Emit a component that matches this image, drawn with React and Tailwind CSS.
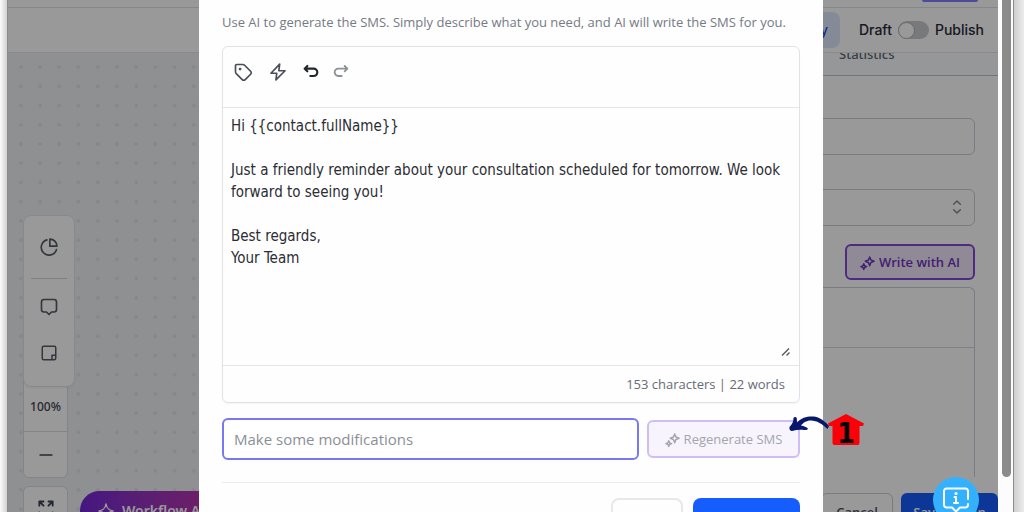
import React from "react";

const SPARKLE_BIG = "M12 1.500 C13 8 15.500 10.500 22.500 12 C15.500 13.500 13 16 12 22.500 C11 16 8.500 13.500 1.500 12 C8.500 10.500 11 8 12 1.500 Z";

function Sparkles({ className }) {
  return (
    <svg viewBox="0 0 24 24" className={className} fill="none" stroke="currentColor" strokeWidth="2.4" strokeLinejoin="round" aria-hidden="true">
      <path d="M15.500 1.500 L17.500 6.500 L22.500 8.500 L17.500 10.500 L15.500 15.500 L13.500 10.500 L8.500 8.500 L13.500 6.500 Z" />
      <path d="M6 12.500 L7.300 15.700 L10.500 17 L7.300 18.300 L6 21.500 L4.700 18.300 L1.500 17 L4.700 15.700 Z" />
    </svg>
  );
}

function Icon({ className, width = 2, children }) {
  return (
    <svg viewBox="0 0 24 24" className={className} fill="none" stroke="currentColor" strokeWidth={width} strokeLinecap="round" strokeLinejoin="round" aria-hidden="true">
      {children}
    </svg>
  );
}

function DotGrid() {
  return (
    <svg className="absolute inset-0 h-full w-full" aria-hidden="true">
      <defs>
        <pattern id="dots" x="3.200" y="4.500" width="19.22" height="19.22" patternUnits="userSpaceOnUse">
          <circle cx="9.600" cy="9.600" r="2" fill="#e0e2e6" />
        </pattern>
      </defs>
      <rect width="100%" height="100%" fill="url(#dots)" />
    </svg>
  );
}

function Canvas() {
  return (
    <main className="relative flex-1 bg-[#eef1f4]">
      <DotGrid />
      <div className="absolute bottom-0 left-[15px] flex flex-col gap-2 text-[#3d4350]">
        <div className="flex h-36 w-[45px] flex-col rounded-md border border-[#dadde3] bg-white">
          <span className="flex flex-1 items-end justify-center pb-4 text-xs font-medium">100%</span>
          <button aria-label="Zoom out" className="flex h-[46px] items-center justify-center border-t border-[#dadde3]">
            <Icon className="size-4"><path d="M3 12h18" /></Icon>
          </button>
        </div>
        <button aria-label="Full screen" className="flex h-[26px] w-[45px] justify-center rounded-t-md border border-b-0 border-[#dadde3] bg-white pt-3">
          <Icon className="size-5" width={2.2}><path d="M4 8V3h5M4 3l5 5M15 3h5v5M20 3l-5 5M4 16v5h5M20 16v5h-5" /></Icon>
        </button>
      </div>
      <div className="absolute bottom-[125px] left-[15px] flex h-[172px] w-[52px] flex-col items-center rounded-lg border border-[#e3e5e9] bg-white text-[#565b67] shadow-xs">
        <button aria-label="Statistics" className="flex h-[62px] items-center justify-center">
          <Icon className="size-5"><path d="M13 2.500v8.500h8.500A8.500 8.500 0 0 0 13 2.500Z" /><path d="M9.500 3.500a9.300 9.300 0 1 0 11.400 11.700" /></Icon>
        </button>
        <span className="h-px w-9 bg-[#cfd3da]" />
        <button aria-label="Comment" className="flex h-14 items-center justify-center">
          <Icon className="size-5"><path d="M6 3h12a3 3 0 0 1 3 3v9a3 3 0 0 1-3 3h-3l-3 3-3-3H6a3 3 0 0 1-3-3V6a3 3 0 0 1 3-3Z" /></Icon>
        </button>
        <button aria-label="Note" className="flex h-9 items-center justify-center">
          <Icon className="size-[18px]"><path d="M5 3h14a2 2 0 0 1 2 2v14a2 2 0 0 1-2 2H5a2 2 0 0 1-2-2V5a2 2 0 0 1 2-2ZM21 15h-5v6" /></Icon>
        </button>
      </div>
      <button className="absolute -bottom-[18px] left-[72px] flex h-[39px] items-center gap-2 rounded-full bg-gradient-to-r from-[#7325d6] to-[#c32fa4] px-[18px] text-sm font-semibold text-white">
        <svg viewBox="0 0 24 24" className="size-4" fill="none" stroke="currentColor" strokeWidth="2.400" strokeLinejoin="round" aria-hidden="true">
          <path d={SPARKLE_BIG} />
        </svg>
        Workflow AI
      </button>
    </main>
  );
}

function SidePanel() {
  return (
    <aside className="flex w-64 flex-col bg-white">
      <div className="flex h-[23px] shrink-0 items-start overflow-hidden border-b border-[#bfc3ca] bg-[#fbfcfd]">
        <span className="ml-[97px] -mt-2 text-[13px] leading-[18px] font-medium text-[#5f6572]">Statistics</span>
      </div>
      <div className="flex min-h-0 flex-1 flex-col overflow-hidden pr-[23px]">
        <input aria-label="Name" className="mt-[42px] h-[37px] w-full shrink-0 rounded-md border border-[#c9cdd4] px-3 text-sm" />
        <div className="relative mt-[34px] h-[37px] shrink-0">
          <select aria-label="Sender" className="h-full w-full appearance-none rounded-md border border-[#c9cdd4] px-3 text-sm">
            <option></option>
          </select>
          <Icon className="pointer-events-none absolute top-2.5 right-2.5 size-4 text-[#7c818c]"><path d="M7 8l5-5 5 5M7 16l5 5 5-5" /></Icon>
        </div>
        <button className="mt-[18px] flex h-[36px] w-[130px] shrink-0 items-center justify-center gap-1 self-end rounded-md border-2 border-[#8349d8] bg-[#f1e7fb] pt-0.5 font-['Open_Sans',sans-serif] text-[13px] font-semibold text-[#7034bd]">
          <Sparkles className="size-[15px]" />
          Write with AI
        </button>
        <div className="mt-[7px] flex-1 rounded-t-md border border-b-0 border-[#c9cdd4]">
          <div className="h-[60px] border-b border-[#d5d8de]" />
        </div>
      </div>
      <footer className="flex h-[35px] shrink-0 justify-end gap-2 overflow-hidden pt-4 font-['Open_Sans',sans-serif] text-[13px] font-semibold">
        <button className="h-10 w-[72px] rounded-md border border-[#c9cdd4] text-[#4b515e]">Cancel</button>
        <button className="h-10 w-[97px] rounded-md bg-[#155dfc] text-white">Save Action</button>
      </footer>
    </aside>
  );
}

function Editor() {
  return (
    <div className="flex h-full flex-col bg-white">
      <div className="flex h-2 shrink-0 justify-end border-b border-[#dfe2e8] pr-5">
        <span className="h-[2px] w-14 rounded-b bg-[#7f7dff]" />
      </div>
      <header className="flex h-[45px] shrink-0 items-center justify-end border-b border-[#e4e7eb] pr-3.5 font-['Inter',sans-serif] text-sm font-medium text-[#272b36]">
        <button className="mr-[19px] h-9 rounded-lg bg-[#dce8fb] pr-3 pl-3.5 text-[#1f4fe0]">History</button>
        <label htmlFor="publish">Draft</label>
        <span className="relative mx-1.5 flex h-[18px] w-[31px] items-center rounded-full bg-[#c9cacc]">
          <input id="publish" type="checkbox" role="switch" className="peer absolute inset-0 m-0 h-full w-full cursor-pointer opacity-0" />
          <span className="pointer-events-none size-[17px] rounded-full border border-[#aeb0b4] bg-white peer-checked:ml-auto" />
        </span>
        <span>Publish</span>
      </header>
      <div className="flex min-h-0 flex-1">
        <Canvas />
        <SidePanel />
      </div>
    </div>
  );
}

const MESSAGE = `Hi {{contact.fullName}}

Just a friendly reminder about your consultation scheduled for tomorrow. We look forward to seeing you!

Best regards,
Your Team`;

function SmsDialog() {
  return (
    <section role="dialog" aria-label="Generate SMS" className="w-full max-w-[624px] bg-[#fefefe] px-[23px] pt-3 font-['Open_Sans',sans-serif]">
      <p className="text-[13px] leading-5 text-[#757a84]">
        Use AI to generate the SMS. Simply describe what you need, and AI will write the SMS for you.
      </p>
      <div className="mt-3.5 rounded-md border border-[#e0e2e6] shadow-[0_1px_1px_rgba(0,0,0,0.04)]">
        <div className="flex h-[61px] items-start gap-[15px] border-b border-[#e4e5e9] px-2.5 pt-[15px] text-[#4a4e58]">
          <button aria-label="Insert field">
            <Icon className="size-5"><path d="M3 4.500A1.500 1.500 0 0 1 4.500 3h7.300a3 3 0 0 1 2.100.9l7.200 7.200a2.500 2.500 0 0 1 0 3.600l-6.400 6.400a2.500 2.500 0 0 1-3.600 0l-7.200-7.200A3 3 0 0 1 3 11.800Z" /><circle cx="8.500" cy="8.500" r=".7" fill="currentColor" /></Icon>
          </button>
          <button aria-label="Shortcuts">
            <Icon className="size-5"><path d="M14 2.500 3.500 13.500H10.500L9.500 21.500 20.500 10.500H13Z" /></Icon>
          </button>
          <div className="-ml-0.5 flex gap-2.5">
            <button aria-label="Undo" className="flex size-5 items-center justify-center text-[#24262c]">
              <Icon className="size-4" width={3.2}><path d="M6.500 3 2.500 7 6.500 11M2.500 7H16a5.500 5.500 0 0 1 0 11h-5" /></Icon>
            </button>
            <button aria-label="Redo" className="flex size-5 items-center justify-center text-[#8d9199]">
              <Icon className="size-4" width={2.8}><path d="M17.500 3 21.500 7 17.500 11M21.500 7H8a5.500 5.500 0 0 0 0 11h5" /></Icon>
            </button>
          </div>
        </div>
        <div className="relative">
          <textarea
            aria-label="Message"
            spellCheck={false}
            defaultValue={MESSAGE}
            className="block h-[257px] w-full resize-none px-2 pt-[7px] font-['DejaVu_Sans_Condensed','DejaVu_Sans',sans-serif] text-[15px] leading-[22px] text-[#2b2d33] outline-none"
          />
          <svg viewBox="0 0 10 10" className="absolute right-2 bottom-2 size-2.5" stroke="#55585f" strokeWidth="1.400" aria-hidden="true">
            <path d="M1 8.500 8 1.500M5.500 8.500 8.500 5.500" />
          </svg>
        </div>
        <div className="flex h-[37px] items-center justify-end border-t border-[#e4e5e9] px-3.5 pt-0.5 text-[13px] text-[#666b75]">
          153 characters | 22 words
        </div>
      </div>
      <div className="mt-[15px] flex items-center gap-2">
        <input
          aria-label="Make some modifications"
          placeholder="Make some modifications"
          className="h-[42px] min-w-0 flex-1 rounded-md border-2 border-[#7878f2] bg-white px-2.5 text-[15px] text-[#2b2d33] outline-none placeholder:text-[#8b8f97]"
        />
        <button className="flex h-[38px] w-[153px] items-center justify-center gap-1 rounded-md border-2 border-[#cfbdf8] bg-[#f7f4fd] pt-0.5 text-[13px] font-medium text-[#a5a5ab]">
          <Sparkles className="size-[15px]" />
          Regenerate SMS
        </button>
      </div>
      <div className="mt-[22px] flex justify-end gap-2.5 border-t border-[#ececee] pt-[15px] text-[13px] font-semibold">
        <button className="h-11 w-[72px] rounded-lg border-2 border-[#e6e8ec] text-[#4b515e]">Cancel</button>
        <button className="h-11 w-[107px] rounded-lg bg-[#155dfc] text-white">Use SMS</button>
      </div>
    </section>
  );
}

function StepMarker() {
  return (
    <div className="absolute top-[413px] left-1/2 ml-[277px] flex items-start">
      <svg viewBox="0 0 40 22" className="h-[22px] w-10" aria-hidden="true">
        <path d="M0.500 14 C3 11.500 4.500 9 4.500 5 C5.500 3.500 7.500 4 7.800 5.500 L8 9.500 C14 3 24 2.500 30 5 C34 7 37 9.500 40 13 L38.500 16 C33 11 28 7.500 22 7.500 C17 7.500 14 10 12 12.500 C15 13 17.500 14 19 15.500 C18.500 17 17 17.200 15 17 C11 16.500 7 17 3 18 C1 18 0 16 0.500 14 Z" fill="#07176b" />
      </svg>
      <div className="relative -ml-0.5 flex h-[34px] w-[38px] justify-center">
        <svg viewBox="0 0 38 34" className="absolute inset-0 h-full w-full" aria-hidden="true">
          <path d="M19 1 L37 10.500 L36 13 L32.500 13 V30 Q32.500 32 30.500 32 H7.500 Q5.500 32 5.500 30 V13 L2 13 L1 10.500 Z" fill="#fb0007" />
        </svg>
        <span className="relative pt-1.5 font-['DejaVu_Sans_Condensed','DejaVu_Sans',sans-serif] text-[28px] leading-[30px] font-bold text-black">1</span>
      </div>
    </div>
  );
}

export default function App() {
  return (
    <div className="relative flex h-screen overflow-hidden bg-white font-['Noto_Sans',sans-serif]">
      <div className="w-[7px] shrink-0 bg-gradient-to-r from-[#fafafa] to-[#d2d2d2]" />
      <div className="relative min-w-0 flex-1 overflow-hidden border-l border-[#8a8a8a]">
        <Editor />
        <div className="absolute inset-0 bg-black/40" />
      </div>
      <div className="flex w-4 shrink-0 justify-center border-r border-[#8c8c8c] bg-[#fcfcfc] pl-0.5">
        <div className="h-[477px] w-[9px] rounded-b-full bg-[#8b8b8b]" />
      </div>
      <div className="w-2.5 shrink-0 bg-gradient-to-r from-[#cfcfcf] to-[#ececec]" />
      <div className="absolute inset-0 flex items-start justify-center pr-0.5">
        <SmsDialog />
      </div>
      <StepMarker />
      <button aria-label="Help" className="absolute right-[45px] -bottom-[11px] flex size-[46px] items-center justify-center rounded-full bg-[#33b1ff] text-white">
        <svg viewBox="0 0 28 28" className="size-7" fill="none" stroke="currentColor" strokeWidth="2" strokeLinecap="round" strokeLinejoin="round" aria-hidden="true">
          <path d="M26 13V5a2.500 2.500 0 0 0-2.500-2.500h-19A2.500 2.500 0 0 0 2 5v14a2.500 2.500 0 0 0 2.500 2.500H10l4 4 4-4h5.500A2.500 2.500 0 0 0 26 19v-1" />
          <path d="M12.500 11H14v6M12 17h4" />
          <circle cx="14" cy="7.500" r=".6" fill="currentColor" />
        </svg>
      </button>
    </div>
  );
}
